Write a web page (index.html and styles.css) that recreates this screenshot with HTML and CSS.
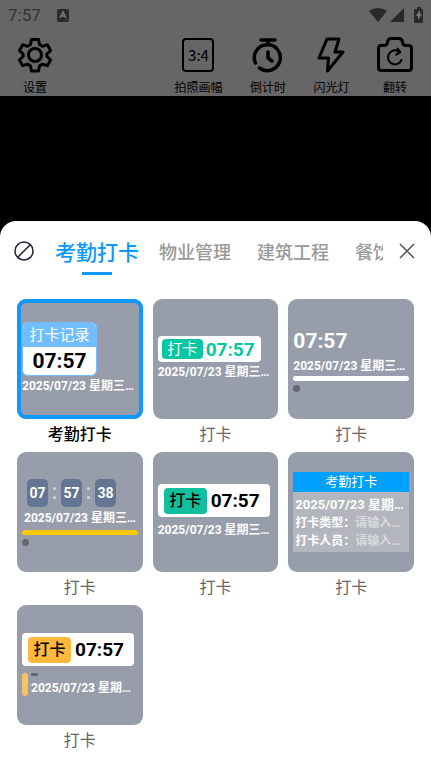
FILE: index.html
```html
<!DOCTYPE html>
<html lang="zh-CN">
<head>
<meta charset="utf-8">
<meta name="viewport" content="width=device-width, initial-scale=1">
<title>考勤打卡</title>
<link rel="stylesheet" href="styles.css">
</head>
<body>
<header class="top">
  <div class="status">
    <span class="clock">7:57</span>
    <svg class="app-badge" width="12" height="13" viewBox="0 0 12 13"><rect width="12" height="13" rx="2" fill="#292929"/><path d="M3 9 6 3l3 6M4 7h4" fill="none" stroke="#777" stroke-width="1.6"/><path d="M8 11h2" stroke="#555"/></svg>
    <svg class="signals" width="54" height="16" viewBox="0 0 54 16" fill="#292929"><path d="M0 4Q9-2 18 4L9 15Z"/><path d="M35 1v14H21Z"/><path d="M46 2h2V0h4v2h1q1 0 1 1v12q0 1-1 1h-7q-1 0-1-1V3q0-1 1-1Z"/><path d="m50 4-3 5h2v4l4-6h-2V4Z" fill="#777"/></svg>
  </div>
  <nav class="tools">
    <button class="tool tool-first"><svg width="36" height="36" viewBox="0 0 36 36"><path d="M14.500 2.500h7l1 5 3 1.800 4.800-1.600 3.300 5.900-3.700 3.400v2.500l3.700 3.300-3.300 5.900-4.800-1.600-3 1.800-1 5.100h-7l-1-5.100-3-1.800-4.800 1.600-3.300-5.900 3.700-3.300V17l-3.700-3.400 3.300-5.900 4.800 1.600 3-1.800Z"/><circle cx="18" cy="18" r="6.500"/></svg><span>设置</span></button>
    <button class="tool"><span class="ratio">3:4</span><span>拍照画幅</span></button>
    <button class="tool"><svg width="36" height="36" viewBox="0 0 36 36"><g stroke-width="3.500"><path d="M11 3h14M18 3v5M5.500 26A13 13 0 1 1 9.500 31M18 15v6l4 3"/></g></svg><span>倒计时</span></button>
    <button class="tool"><svg width="36" height="36" viewBox="0 0 36 36"><path d="M14 2h12l-4 13h8L14.500 34l1-13H6Z"/></svg><span>闪光灯</span></button>
    <button class="tool"><svg width="36" height="36" viewBox="0 0 36 36"><path d="M4 8.500h3q3 0 3.500-3V5q.5-3.500 3.500-3.500h8q3 0 3.500 3.500v.5q.5 3 3.500 3h3q2.500 0 2.500 3v19q0 3-3 3h-27q-3 0-3-3v-19q0-3 2.500-3Z"/><path d="M24.500 23A7 7 0 1 1 21 14l2 1M20.500 11.500l2.800 3.600-4 2.600" stroke-width="2"/></svg><span>翻转</span></button>
  </nav>
</header>
<main class="sheet">
  <div class="sheet-head">
    <button class="icon-btn" aria-label="无水印"><svg width="20" height="20" viewBox="0 0 20 20" fill="none" stroke="#25253a" stroke-width="1.500"><circle cx="10" cy="10" r="9"/><path d="M3.500 16.500l13-13"/></svg></button>
    <nav class="tabs">
      <button class="tab tab-active">考勤打卡</button>
      <button class="tab">物业管理</button>
      <button class="tab">建筑工程</button>
      <button class="tab">餐饮</button>
    </nav>
    <button class="icon-btn" aria-label="关闭"><svg width="16" height="16" viewBox="0 0 16 16" fill="none" stroke="#555" stroke-width="1.500"><path d="M1 1l14 14M15 1L1 15"/></svg></button>
  </div>
  <div class="grid">
    <button class="item item-selected">
      <span class="card">
        <span class="record"><span class="record-title">打卡记录</span><span class="record-time">07:57</span></span>
        <span class="date">2025/07/23 星期三…</span>
      </span>
      <span class="name">考勤打卡</span>
    </button>
    <button class="item">
      <span class="card">
        <span class="pill pill-small"><span class="badge badge-small">打卡</span><span class="time time-green">07:57</span></span>
        <span class="date">2025/07/23 星期三…</span>
      </span>
      <span class="name">打卡</span>
    </button>
    <button class="item">
      <span class="card">
        <span class="big-time">07:57</span>
        <span class="date">2025/07/23 星期三…</span>
        <span class="line"></span>
        <span class="dot"></span>
      </span>
      <span class="name">打卡</span>
    </button>
    <button class="item">
      <span class="card">
        <span class="digits"><span class="digit">07</span><span class="colon"></span><span class="digit">57</span><span class="colon"></span><span class="digit">38</span></span>
        <span class="date date-inset">2025/07/23 星期三…</span>
        <span class="line line-yellow"></span>
        <span class="dot"></span>
      </span>
      <span class="name">打卡</span>
    </button>
    <button class="item">
      <span class="card">
        <span class="pill"><span class="badge badge-green">打卡</span><span class="time">07:57</span></span>
        <span class="date date-below">2025/07/23 星期三…</span>
      </span>
      <span class="name">打卡</span>
    </button>
    <button class="item">
      <span class="card">
        <span class="form-title">考勤打卡</span>
        <span class="form-body">
          <span class="form-date">2025/07/23 星期…</span>
          <span class="form-row">打卡类型：<span class="hint">请输入…</span></span>
          <span class="form-row">打卡人员：<span class="hint">请输入…</span></span>
        </span>
      </span>
      <span class="name">打卡</span>
    </button>
    <button class="item">
      <span class="card">
        <span class="pill"><span class="badge badge-yellow">打卡</span><span class="time">07:57</span></span>
        <span class="note"><span class="note-bar"></span><span class="note-text"><span class="dash"></span><span class="note-date">2025/07/23 星期…</span></span></span>
      </span>
      <span class="name">打卡</span>
    </button>
  </div>
</main>
</body>
</html>
```
FILE: styles.css
```css
* { box-sizing: border-box; }

body {
  margin: 0;
  min-height: 100vh;
  display: flex;
  flex-direction: column;
  background: #000;
  font-family: Roboto, "Noto Sans CJK SC", sans-serif;
}

button {
  margin: 0;
  padding: 0;
  border: 0;
  background: none;
  color: inherit;
  font: inherit;
  white-space: nowrap;
}

svg { display: block; }

.top {
  height: 96px;
  margin-bottom: 125px;
  background: #666;
  overflow: hidden;
}

.status {
  display: flex;
  align-items: center;
  height: 30px;
  padding: 0 8px;
  color: #333;
  font-size: 17px;
}

.app-badge { margin-left: 16px; }
.signals { margin-left: auto; }

.tools {
  display: flex;
  justify-content: space-between;
  padding: 7px 18px 0 17px;
}

.tool {
  display: flex;
  flex-direction: column;
  align-items: center;
  gap: 6px;
  color: #000;
  font-size: 12px;
  line-height: 18px;
}

.tool-first { margin-right: 94px; }

.tool svg {
  fill: none;
  stroke: #000;
  stroke-width: 3;
  stroke-linecap: round;
  stroke-linejoin: round;
}

.ratio {
  width: 32px;
  height: 34px;
  margin: 1px 0;
  border: 2px solid #000;
  border-radius: 4px;
  font-family: "Noto Sans CJK SC", sans-serif;
  font-size: 15px;
  line-height: 30px;
}

.sheet {
  flex: 1;
  background: #fff;
  border-radius: 16px 16px 0 0;
}

.sheet-head {
  display: flex;
  align-items: center;
  height: 60px;
  padding: 0 16px 0 14px;
}

.tabs {
  flex: 1;
  display: flex;
  align-items: center;
  height: 60px;
  margin: 0 16px 0 21px;
  gap: 26px;
  overflow: hidden;
}

.tab {
  color: #999;
  font-size: 18px;
  font-weight: 500;
}

.tab-active {
  position: relative;
  height: 60px;
  margin-right: -6px;
  color: #0d99ff;
  font-size: 21px;
}

.tab-active::after {
  content: "";
  position: absolute;
  left: 50%;
  bottom: 6px;
  width: 30px;
  height: 3px;
  margin-left: -15px;
  background: #0d99ff;
}

.grid {
  display: grid;
  grid-template-columns: repeat(3, 1fr);
  column-gap: 10px;
  padding: 18px 17px 8px;
}

.item {
  display: flex;
  flex-direction: column;
  min-width: 0;
  color: #666;
  font-size: 16px;
  text-align: left;
}

.card {
  display: flex;
  flex-direction: column;
  align-items: flex-start;
  justify-content: center;
  width: 100%;
  height: 120px;
  padding: 0 5px;
  border-radius: 9px;
  background: #989dac;
  color: #fff;
  overflow: hidden;
}

.item-selected .card { box-shadow: inset 0 0 0 4px #0d99ff; }

.name {
  width: 100%;
  padding-bottom: 2px;
  line-height: 31px;
  text-align: center;
}

.item-selected .name {
  color: #000;
  font-weight: 500;
}

.date,
.note-date {
  font-size: 12px;
  font-weight: 700;
  line-height: 20px;
}

.note-date { line-height: 18px; }

.date-inset {
  margin-left: 2px;
  line-height: 23px;
}

.date-below { margin-top: 3px; }

.record {
  display: flex;
  flex-direction: column;
  width: 75px;
  border: 1px solid #70bdff;
  border-radius: 6px;
  background: #fff;
  text-align: center;
  overflow: hidden;
}

.record-title {
  background: #70bdff;
  font-size: 15px;
  line-height: 24px;
}

.record-time {
  color: #000;
  font-size: 21px;
  font-weight: 700;
  line-height: 28px;
}

.pill {
  display: flex;
  align-items: center;
  gap: 4px;
  height: 33px;
  padding: 0 10px 0 6px;
  border-radius: 4px;
  background: #fff;
}

.pill-small {
  gap: 3px;
  height: 26px;
  padding: 0 6px 0 4px;
}

.badge {
  width: 43px;
  border-radius: 4px;
  color: #000;
  font-size: 16px;
  font-weight: 500;
  line-height: 26px;
  text-align: center;
}

.badge-small {
  width: 41px;
  background: #06c7a1;
  color: #fff;
  font-size: 15px;
  font-weight: 400;
  line-height: 20px;
}

.badge-green { background: #11bf9f; }
.badge-yellow { background: #ffb83e; }

.time {
  color: #000;
  font-size: 19px;
  font-weight: 700;
}

.time-green { color: #06c7a1; }

.big-time {
  font-size: 21px;
  font-weight: 700;
  line-height: 30px;
}

.line {
  width: 100%;
  height: 5px;
  border-radius: 3px;
  background: #fff;
}

.line-yellow { background: #ffc800; }

.dot {
  width: 7px;
  height: 7px;
  margin-top: 4px;
  border-radius: 50%;
  background: #656871;
}

.digits {
  display: flex;
  align-items: center;
  gap: 5px;
  margin-left: 5px;
}

.digit {
  width: 21px;
  border-radius: 5px;
  background: #637593;
  font-size: 14px;
  font-weight: 700;
  line-height: 28px;
  text-align: center;
}

.colon {
  display: flex;
  flex-direction: column;
  justify-content: space-between;
  width: 3px;
  height: 12px;
}

.colon::before,
.colon::after {
  content: "";
  height: 3px;
  border-radius: 50%;
  background: #d4d6db;
}

.form-title {
  width: 100%;
  background: #00a0ff;
  font-size: 13px;
  line-height: 20px;
  text-align: center;
}

.form-body {
  display: flex;
  flex-direction: column;
  width: 100%;
  padding: 4px 0 2px 2px;
  background: #b3b6be;
  font-size: 12px;
  font-weight: 700;
  line-height: 18px;
}

.form-date { font-size: 13px; }
.hint { color: #d9dadf; }

.note {
  display: flex;
  gap: 3px;
  margin-top: 7px;
}

.note-bar {
  width: 6px;
  height: 23px;
  border-radius: 3px;
  background: #f2c463;
}

.note-text {
  display: flex;
  flex-direction: column;
  gap: 3px;
}

.dash {
  width: 7px;
  height: 3px;
  border-radius: 1px;
  background: #656871;
}
```
